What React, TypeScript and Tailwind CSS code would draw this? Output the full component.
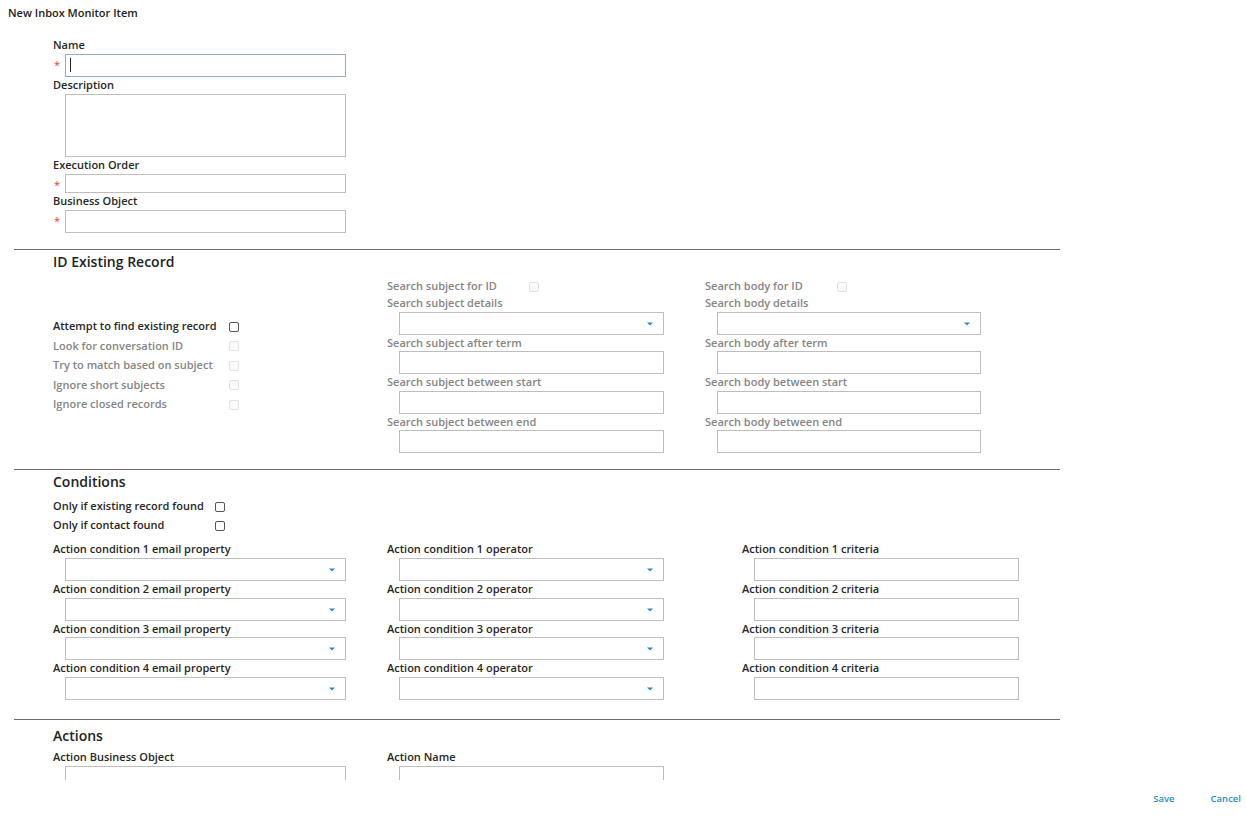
import React from "react";

const labelCls = "leading-[16px] text-[11px] font-semibold whitespace-nowrap";

function Caret() {
  return (
    <svg width="6" height="4" viewBox="0 0 6 4" className="absolute right-[10px] top-1/2 -translate-y-1/2">
      <path d="M0 0.5h6L3 3.5z" fill="#2a8bb8" />
    </svg>
  );
}

function Box({ w, h = 23, select, focused, cursor }: { w: number; h?: number; select?: boolean; focused?: boolean; cursor?: boolean }) {
  return (
    <div
      className={`relative bg-white border ${focused ? "border-[#8eaec4]" : "border-[#bdbdbd]"}`}
      style={{ width: w, height: h }}
    >
      {cursor && <div className="absolute left-[4px] top-[3px] w-px h-[14px] bg-[#222]" />}
      {select && <Caret />}
    </div>
  );
}

function Check({ disabled }: { disabled?: boolean }) {
  return (
    <div
      className={`w-[10px] h-[10px] rounded-[2px] border ${disabled ? "border-[#e2e2e2] bg-[#fafafa]" : "border-[#555] bg-white"}`}
    />
  );
}

type FieldProps = {
  label: string;
  w: number;
  h?: number;
  lh?: number;
  required?: boolean;
  select?: boolean;
  disabled?: boolean;
  focused?: boolean;
  cursor?: boolean;
};

function Field({ label, w, h, lh = 17, required, select, disabled, focused, cursor }: FieldProps) {
  return (
    <div>
      <div className={`${labelCls} ${disabled ? "text-[#858585]" : "text-[#262626]"}`} style={{ height: lh }}>
        {label}
      </div>
      <div className="flex">
        <div className="w-[12px] pl-[1px] text-[#ee3344] text-[11px] leading-[16px] pt-[3px]">{required ? "*" : ""}</div>
        <Box w={w} h={h} select={select} focused={focused} cursor={cursor} />
      </div>
    </div>
  );
}

function CheckRow({ label, w, disabled, h = 19 }: { label: string; w: number; disabled?: boolean; h?: number }) {
  return (
    <div className="flex items-center" style={{ height: h }}>
      <div className={`text-[11px] font-semibold whitespace-nowrap ${disabled ? "text-[#858585]" : "text-[#262626]"}`} style={{ width: w }}>
        {label}
      </div>
      <Check disabled={disabled} />
    </div>
  );
}

function Divider() {
  return <div className="ml-[14px] w-[1046px] h-px bg-[#6b6b6b]" />;
}

function Heading({ children }: { children: React.ReactNode }) {
  return <div className="pl-[53px] h-[25px] leading-[23px] text-[14px] font-semibold text-[#222]">{children}</div>;
}

// label heights chosen so rows land on the reference's 39/40px rhythm
const idLh = [17, 16, 17, 16];
const condLh = [17, 17, 16, 17];

export default function App() {
  const conds = [1, 2, 3, 4];
  const subject = ["details", "after term", "between start", "between end"];
  return (
    <div className="w-[1246px] h-[820px] bg-white flex flex-col font-['Open_Sans',_'Liberation_Sans',_sans-serif]">
      <div className="h-[780px] overflow-hidden">
        {/* Title */}
        <div className="pl-[8px] pt-[5px] h-[37px] text-[11px] leading-[16px] font-semibold text-[#222]">New Inbox Monitor Item</div>

        {/* Main fields */}
        <div className="pl-[53px] flex flex-col">
          <Field label="Name" w={281} required focused cursor />
          <Field label="Description" w={281} h={63} />
          <Field label="Execution Order" w={281} h={19} required />
          <Field label="Business Object" w={281} required />
        </div>

        <div className="h-[16px]" />
        <Divider />

        {/* ID Existing Record */}
        <Heading>ID Existing Record</Heading>
        <div className="pl-[53px] pt-[3px] flex">
          <div className="w-[334px] flex flex-col justify-center">
            <CheckRow label="Attempt to find existing record" w={176} h={20} />
            <CheckRow label="Look for conversation ID" w={176} disabled h={19} />
            <CheckRow label="Try to match based on subject" w={176} disabled h={20} />
            <CheckRow label="Ignore short subjects" w={176} disabled h={19} />
            <CheckRow label="Ignore closed records" w={176} disabled h={20} />
          </div>
          <div className="w-[318px] flex flex-col">
            <CheckRow label="Search subject for ID" w={142} disabled h={17} />
            {subject.map((s, i) => (
              <Field key={s} label={`Search subject ${s}`} w={265} lh={idLh[i]} select={i === 0} disabled />
            ))}
          </div>
          <div className="flex flex-col">
            <CheckRow label="Search body for ID" w={132} disabled h={17} />
            {subject.map((s, i) => (
              <Field key={s} label={`Search body ${s}`} w={264} lh={idLh[i]} select={i === 0} disabled />
            ))}
          </div>
        </div>

        <div className="h-[16px]" />
        <Divider />

        {/* Conditions */}
        <Heading>Conditions</Heading>
        <div className="pl-[53px] pt-[2px]">
          <CheckRow label="Only if existing record found" w={162} h={19} />
          <CheckRow label="Only if contact found" w={162} h={19} />
        </div>
        <div className="pl-[53px] pt-[6px] flex">
          <div className="w-[334px] flex flex-col">
            {conds.map((n, i) => (
              <Field key={n} label={`Action condition ${n} email property`} w={281} lh={condLh[i]} select />
            ))}
          </div>
          <div className="w-[355px] flex flex-col">
            {conds.map((n, i) => (
              <Field key={n} label={`Action condition ${n} operator`} w={265} lh={condLh[i]} select />
            ))}
          </div>
          <div className="flex flex-col">
            {conds.map((n, i) => (
              <Field key={n} label={`Action condition ${n} criteria`} w={265} lh={condLh[i]} />
            ))}
          </div>
        </div>

        <div className="h-[19px]" />
        <Divider />

        {/* Actions */}
        <div className="h-[4px]" />
        <Heading>Actions</Heading>
        <div className="pl-[53px] flex">
          <div className="w-[334px]">
            <Field label="Action Business Object" w={281} />
          </div>
          <div>
            <Field label="Action Name" w={265} />
          </div>
        </div>
      </div>

      {/* Footer */}
      <div className="flex-1 flex items-center justify-end pr-[5px] pb-[1px] gap-[36px] text-[9.5px] font-semibold text-[#2b8bc2]">
        <span>Save</span>
        <span>Cancel</span>
      </div>
    </div>
  );
}
